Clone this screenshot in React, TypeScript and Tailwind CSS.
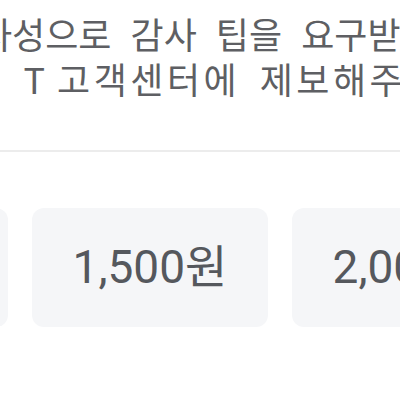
const tips = ['1,000원', '1,500원', '2,000원'];

export default function App() {
  return (
    <div className="w-[400px] h-[400px] overflow-hidden bg-white font-['Roboto','Noto_Sans_CJK_KR',sans-serif]">
      {/* Notice text */}
      <div className="pt-[11px] text-[36px] leading-[45px] text-[#5e5f63] whitespace-nowrap font-['Noto_Sans_CJK_KR',sans-serif]">
        <div className="ml-[-21px] [word-spacing:11px]">자성으로 감사 팁을 요구받으셨다면</div>
        <div className="ml-[-106px] tracking-[3.5px] [word-spacing:8px]">
          카카오 <span className="mr-[-11px]">T</span> 고객센터에 제보해주세요.
        </div>
      </div>

      <div className="mt-[49px] h-[2px] bg-[#ececec]" />

      {/* Tip options */}
      <div className="mt-[56px] ml-[-228px] flex gap-[24px]">
        {tips.map((tip) => (
          <button
            key={tip}
            className="w-[236px] h-[119px] shrink-0 rounded-[12px] bg-[#f5f6f8] text-[46px] text-[#55585d] flex items-center justify-center"
          >
            {tip}
          </button>
        ))}
      </div>
    </div>
  );
}
